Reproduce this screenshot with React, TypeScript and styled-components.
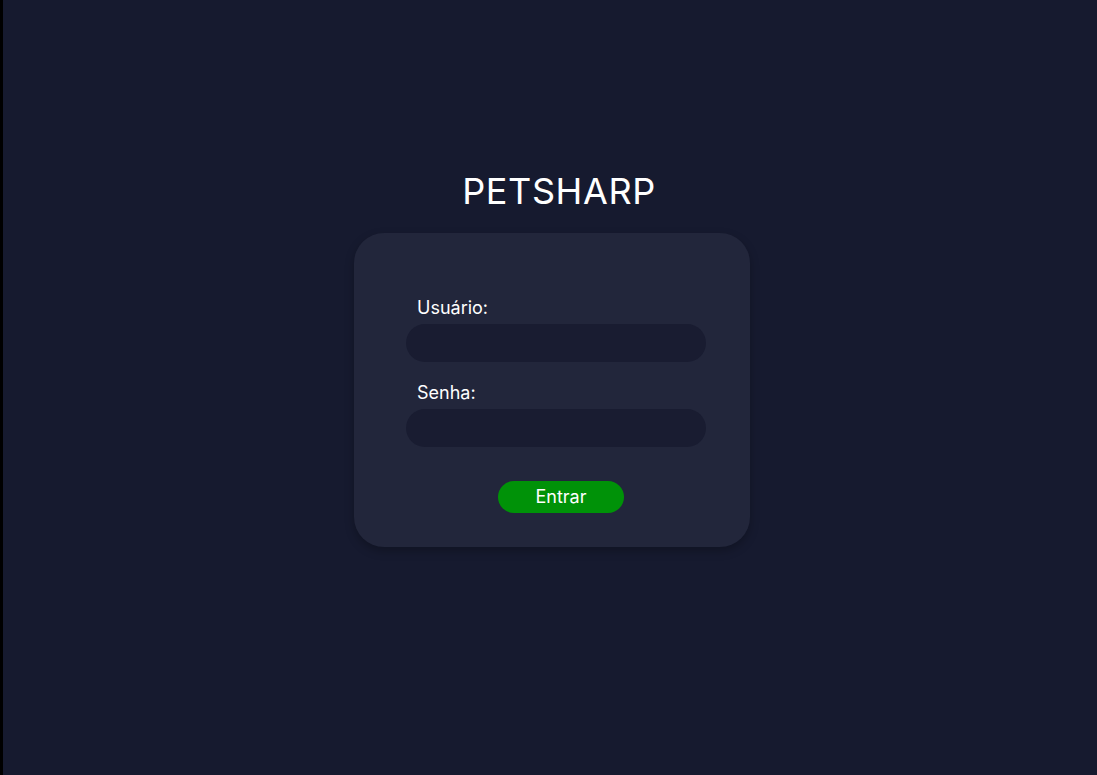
import React from "react";
import styled, { createGlobalStyle } from "styled-components";

const Global = createGlobalStyle`
  html, body { margin: 0; padding: 0; background: #000; }
  body { font-family: Inter, "Noto Sans", sans-serif; }
  * { box-sizing: border-box; }
`;

const Page = styled.main`
  margin-left: 3px;
  min-height: 100vh;
  background: #161a2f;
  display: flex;
  flex-direction: column;
  align-items: center;
  padding-top: 166px;
`;

const Title = styled.h1`
  margin: 0 0 0 18px;
  font-family: Inter, sans-serif;
  font-weight: 400;
  font-size: 36px;
  line-height: 50px;
  letter-spacing: 0.6px;
  color: #ffffff;
`;

const Card = styled.form`
  margin: 17px 0 0 4px;
  width: 396px;
  height: 314px;
  background: #22263b;
  border-radius: 30px;
  box-shadow: 0 4px 10px rgba(0, 0, 0, 0.25);
  padding: 64px 45px 0 52px;
  display: flex;
  flex-direction: column;
`;

const Field = styled.div<{ $gap: number }>`
  display: flex;
  flex-direction: column;
  gap: 5px;
  margin-bottom: ${(p) => p.$gap}px;
`;

const Label = styled.label`
  padding-left: 11px;
  font-size: 18px;
  line-height: 22px;
  color: #ffffff;
`;

const Input = styled.input`
  width: 300px;
  height: 38px;
  border: none;
  outline: none;
  border-radius: 19px;
  background: #191c31;
  color: #fff;
  padding: 0 16px;
  font-family: Inter, sans-serif;
  font-size: 16px;
`;

const Button = styled.button`
  align-self: flex-start;
  margin-left: 92px;
  width: 126px;
  height: 32px;
  border: none;
  border-radius: 16px;
  background: #009208;
  color: #ffffff;
  font-family: Inter, sans-serif;
  font-size: 18px;
  line-height: 22px;
  cursor: pointer;
`;

export default function App() {
  return (
    <>
      <Global />
      <Page>
        <Title>PETSHARP</Title>
        <Card onSubmit={(e) => e.preventDefault()}>
          <Field $gap={20}>
            <Label htmlFor="user">Usuário:</Label>
            <Input id="user" type="text" />
          </Field>
          <Field $gap={34}>
            <Label htmlFor="pass">Senha:</Label>
            <Input id="pass" type="password" />
          </Field>
          <Button type="submit">Entrar</Button>
        </Card>
      </Page>
    </>
  );
}
